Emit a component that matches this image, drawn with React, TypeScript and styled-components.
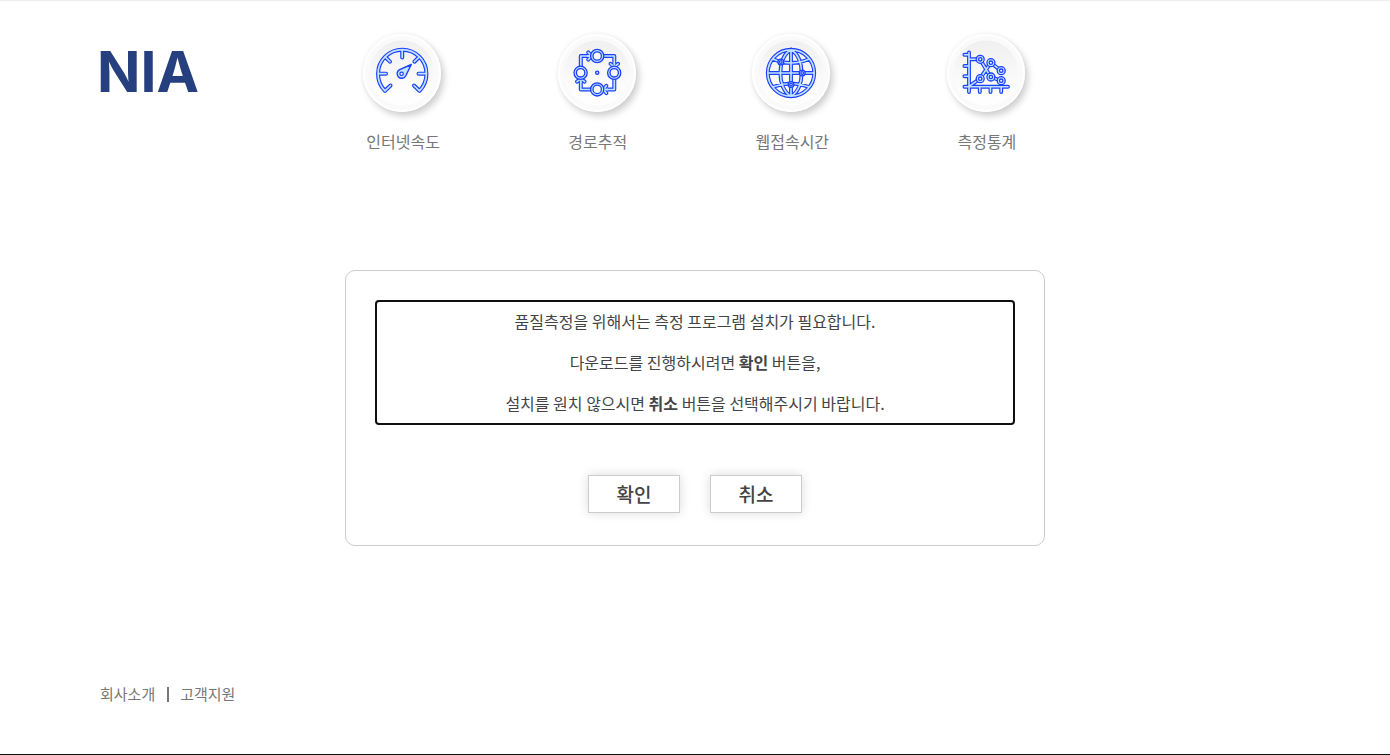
import React from 'react';
import styled, { createGlobalStyle } from 'styled-components';

const GlobalStyle = createGlobalStyle`
  *, *::before, *::after { box-sizing: border-box; }
  body {
    margin: 0;
    background: #fff;
    color: #444;
    font-family: 'Noto Sans CJK KR', 'Noto Sans', sans-serif;
    font-size: 16px;
    line-height: 24px;
  }
`;

const Page = styled.div`
  min-height: 100vh;
  display: flex;
  flex-direction: column;
  border-top: 1px solid #eee;
  border-bottom: 1px solid #111;
`;

const Header = styled.header`
  display: grid;
  grid-template-columns: 22% 56% 22%;
  padding-top: 33px;
`;

const Logo = styled.a`
  justify-self: start;
  margin-left: 97px;
  padding-top: 8px;
  color: #253f7f;
  font-family: Inter, 'Liberation Sans', sans-serif;
  font-size: 57px;
  font-weight: 700;
  line-height: 60px;
  text-decoration: none;
`;

const Menu = styled.nav`
  display: grid;
  grid-template-columns: repeat(4, 1fr);
`;

const MenuLink = styled.a`
  display: flex;
  flex-direction: column;
  align-items: center;
  gap: 17px;
  color: #777;
  text-decoration: none;
`;

const Disc = styled.span`
  width: 78px;
  height: 78px;
  margin-right: 2px;
  border: 2px solid #fff;
  border-radius: 50%;
  background: radial-gradient(circle, transparent 32px, #fafafa 33px), linear-gradient(#f0f0f0 8%, #fefefe 80%);
  box-shadow: 3px 4px 7px rgba(0, 0, 0, 0.2), -1px -1px 4px rgba(0, 0, 0, 0.04);

  svg {
    display: block;
    margin: -2px;
  }
`;

const Main = styled.main`
  flex: 1;
  padding: 117px 20px 60px;
`;

const Card = styled.section`
  max-width: 700px;
  margin: 0 auto;
  padding: 30px 30px 32px;
  border: 1px solid #ccc;
  border-radius: 10px;
`;

const Message = styled.div`
  outline: 2px solid #101010;
  outline-offset: -1px;
  border-radius: 3px;
  text-align: center;

  p {
    margin: 0;
    line-height: 41px;
  }
`;

const Actions = styled.div`
  display: flex;
  justify-content: center;
  gap: 30px;
  margin-top: 51px;
`;

const ActionButton = styled.button`
  width: 92px;
  height: 38px;
  padding: 0;
  border: 1px solid #ccc;
  background: #fff;
  box-shadow: 0 0 10px rgba(0, 0, 0, 0.15);
  color: #444;
  font: 500 19px/36px 'Noto Sans CJK KR', 'Noto Sans', sans-serif;
  cursor: pointer;
`;

const Footer = styled.footer`
  display: flex;
  align-items: center;
  padding: 0 100px 48px;
  font-size: 15px;
`;

const FooterLink = styled.a`
  color: #777;
  text-decoration: none;

  & + & {
    display: flex;
    align-items: center;
  }

  & + &::before {
    content: '';
    width: 2px;
    height: 15px;
    margin: 0 11px 0 12px;
    background: #777;
  }
`;

const BLUE = '#1a40ff';
const PALE = '#c4e2ff';

/* Pipe-like line: a blue stroke with a pale core. */
const Pipe = ({ d, width = 4 }: { d: string; width?: number }) => (
  <g fill="none" strokeLinecap="round" strokeLinejoin="round">
    <path d={d} stroke={BLUE} strokeWidth={width} />
    <path d={d} stroke={PALE} strokeWidth={width - 2.3} />
  </g>
);

const Ring = ({ x, y, r, hole }: { x: number; y: number; r: number; hole: number }) => (
  <g stroke={BLUE} strokeWidth="1.3">
    <circle cx={x} cy={y} r={r} fill={PALE} />
    <circle cx={x} cy={y} r={hole} fill="#f8f8f8" />
  </g>
);

const Icon = ({ children }: { children: React.ReactNode }) => (
  <svg width="78" height="78" viewBox="0 0 78 78" aria-hidden="true">{children}</svg>
);

const GaugeIcon = () => (
  <Icon>
    <Pipe d="M27.5 51.5 L22 56.8 A24.2 24.2 0 1 1 56.5 56.8 L51 51.5 M39.2 16 V23.5 M15.5 39.7 H23 M63 39.7 H55.5 M22.3 23 L27 27.7 M56.2 23 L51.4 27.7" />
    <path d="M48.3 30.5 L36.6 35.6 A4.6 4.6 0 1 0 42.8 41.8 Z" fill={PALE} stroke={BLUE} strokeWidth="1.4" strokeLinejoin="round" />
    <circle cx="38.6" cy="39.8" r="1.7" fill="#fff" stroke={BLUE} strokeWidth="1.2" />
  </Icon>
);

const RouteIcon = () => (
  <Icon>
    <Pipe d="M22.8 34 V22 H34 M44 22 H56.3 V34 M56.3 44 V55.5 H44 M34 55.5 H22.8 V44" />
    <Pipe
      width={4}
      d="M30.2 18.4 L33.4 22 L30.2 25.6 M52.5 29.8 L56.3 32.8 L60.1 29.8 M48.4 51.9 L45.2 55.5 L48.4 59.1 M19 47.6 L22.8 44.6 L26.6 47.6"
    />
    <path d="M29 22 H34 M56.3 28.5 V33 M50 55.5 H45 M22.8 49 V44.5" stroke={PALE} strokeWidth="1.8" />
    <Ring x={39.2} y={22} r={6.6} hole={4.2} />
    <Ring x={56.2} y={38.8} r={6.6} hole={4.2} />
    <Ring x={39.2} y={55.4} r={6.6} hole={4.2} />
    <Ring x={22.6} y={38.8} r={6.6} hole={4.2} />
    <circle cx="39.2" cy="38.7" r="1.6" fill={PALE} stroke={BLUE} strokeWidth="1.3" />
  </Icon>
);

const GlobeIcon = () => (
  <Icon>
    <Pipe
      width={3.9}
      d="M39 15.8 V62.2 M15.8 39 H62.2 M39 15.8 C24.8 23 24.8 55 39 62.2 C53.2 55 53.2 23 39 15.8 M20.8 25 Q39 33 57.2 25 M20.8 53 Q39 46 57.2 53 M39 15.8 A23.2 23.2 0 1 0 39 62.2 A23.2 23.2 0 1 0 39 15.8"
    />
    <Ring x={28.8} y={28} r={2.9} hole={1.3} />
    <Ring x={50.2} y={39} r={2.9} hole={1.3} />
    <Ring x={39} y={50.5} r={2.9} hole={1.3} />
  </Icon>
);

const ChartIcon = () => (
  <Icon>
    <Pipe
      width={3.9}
      d="M22 18.5 V58 M17.4 52.7 H61 M17.4 20.8 H22 M17.4 32 H22 M17.4 42.2 H22 M32.8 52.7 V58 M43.5 52.7 V58 M54.2 52.7 V58 M22.5 25.3 H33 L43.7 43 L54 46.7 M22.5 52.2 L33 44.7 L43.7 28.7 L54 36.7"
    />
    <Ring x={33.2} y={25.3} r={4} hole={1.7} />
    <Ring x={33.2} y={44.7} r={4} hole={1.7} />
    <Ring x={43.9} y={28.7} r={4} hole={1.7} />
    <Ring x={54.2} y={36.7} r={4} hole={1.7} />
    <Ring x={43.9} y={43} r={4} hole={1.7} />
    <Ring x={54.2} y={46.7} r={4} hole={1.7} />
  </Icon>
);

const menu = [
  { label: '인터넷속도', icon: <GaugeIcon /> },
  { label: '경로추적', icon: <RouteIcon /> },
  { label: '웹접속시간', icon: <GlobeIcon /> },
  { label: '측정통계', icon: <ChartIcon /> },
];

export default function App() {
  return (
    <>
      <GlobalStyle />
      <Page>
        <Header>
          <Logo href="#">NIA</Logo>
          <Menu>
            {menu.map(({ label, icon }) => (
              <MenuLink href="#" key={label}>
                <Disc>{icon}</Disc>
                {label}
              </MenuLink>
            ))}
          </Menu>
        </Header>
        <Main>
          <Card>
            <Message tabIndex={0}>
              <p>품질측정을 위해서는 측정 프로그램 설치가 필요합니다.</p>
              <p>다운로드를 진행하시려면 <b>확인</b> 버튼을,</p>
              <p>설치를 원치 않으시면 <b>취소</b> 버튼을 선택해주시기 바랍니다.</p>
            </Message>
            <Actions>
              <ActionButton type="button">확인</ActionButton>
              <ActionButton type="button">취소</ActionButton>
            </Actions>
          </Card>
        </Main>
        <Footer>
          <FooterLink href="#">회사소개</FooterLink>
          <FooterLink href="#">고객지원</FooterLink>
        </Footer>
      </Page>
    </>
  );
}
